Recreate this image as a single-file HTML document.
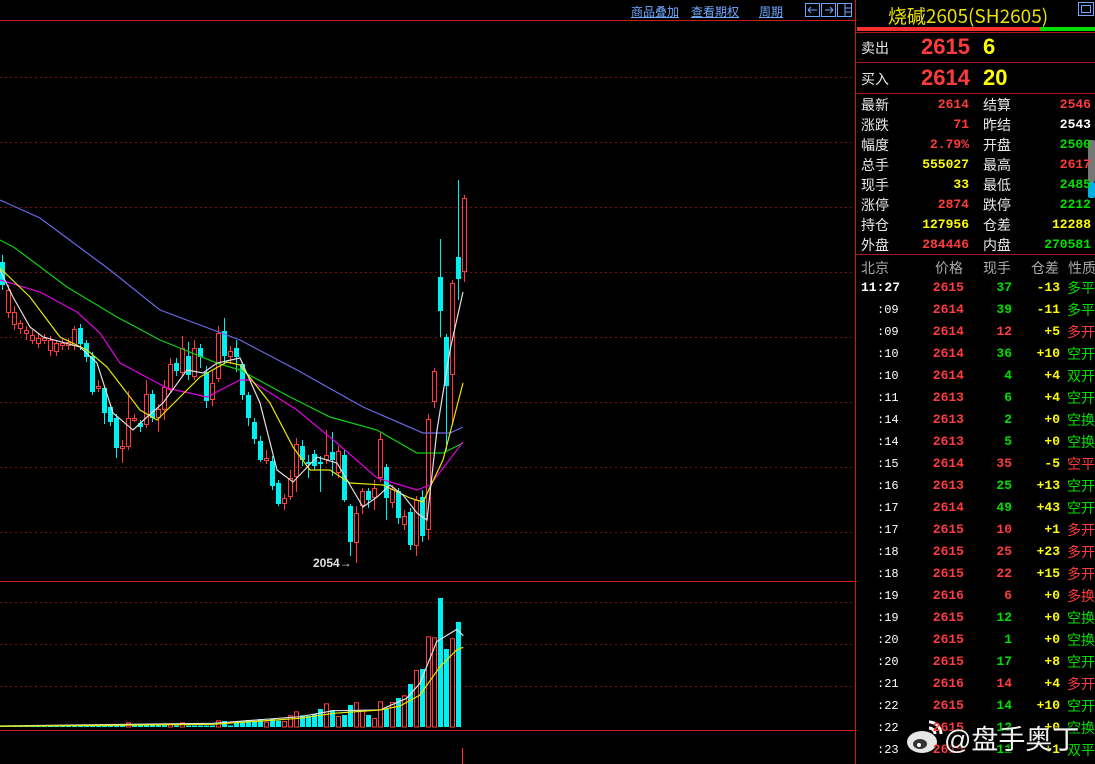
<!DOCTYPE html>
<html><head><meta charset="utf-8"><style>
body{margin:0;width:1095px;height:764px;background:#000;overflow:hidden;position:relative;font-family:"Liberation Sans","Noto Sans CJK SC",sans-serif}
.a{position:absolute;white-space:nowrap}
.lk{color:#6fa8ff;font-size:12px;text-decoration:underline;top:3px}
.r{color:#ff3b3b}.g{color:#00e000}.y{color:#ffff00}.w{color:#fff}
.lb{color:#e8e8e8;font-size:14px}
.v{font-size:13px;font-weight:bold;text-align:right;font-family:"Liberation Mono",monospace}
.t{font-size:13px;font-family:"Liberation Mono",monospace;font-weight:bold}
</style></head><body>
<svg id="c" class="a" style="left:0;top:0" width="1095" height="764"></svg>

<div class="a lk" style="left:631px">商品叠加</div>
<div class="a lk" style="left:691px">查看期权</div>
<div class="a lk" style="left:759px">周期</div>

<div class="a" style="left:862px;top:2px;width:212px;text-align:center;color:#e8e000;font-size:19px;font-family:'Noto Sans CJK SC','Liberation Sans',sans-serif">烧碱2605(SH2605)</div>

<div class="a lb" style="left:861px;top:38px">卖出</div>
<div class="a r" style="left:921px;top:34px;font-size:22px;font-weight:bold">2615</div>
<div class="a y" style="left:983px;top:34px;font-size:22px;font-weight:bold">6</div>
<div class="a lb" style="left:861px;top:69px">买入</div>
<div class="a r" style="left:921px;top:65px;font-size:22px;font-weight:bold">2614</div>
<div class="a y" style="left:983px;top:65px;font-size:22px;font-weight:bold">20</div>

<div id="stats"></div>
<div id="ticks"></div>

<div class="a" style="left:944px;top:718px;color:#fff;font-size:27px;text-shadow:0 0 3px #000,1px 1px 2px #000;opacity:.95">@盘手奥丁</div>

<script>
const S=document.getElementById('c');let h='';
function L(x1,y1,x2,y2,c,d,w){h+=`<line x1="${x1}" y1="${y1}" x2="${x2}" y2="${y2}" stroke="${c}" stroke-width="${w||1}" ${d?'stroke-dasharray="2,3"':''}/>`}
[77,142,207,272,337,402,467,532].forEach(y=>L(0,y+.5,855,y+.5,'#7a1010',1));
[602,644,686].forEach(y=>L(0,y+.5,855,y+.5,'#7a1010',1));
L(0,20.5,855,20.5,'#d01818');L(0,581.5,855,581.5,'#d01818');L(0,730.5,855,730.5,'#d01818');
L(855.5,0,855.5,764,'#d01818');L(462.5,748,462.5,764,'#ff3030');
h+=`<rect x="805.5" y="3.5" width="14" height="13" fill="none" stroke="#6fa8ff"/><rect x="821.5" y="3.5" width="14" height="13" fill="none" stroke="#6fa8ff"/><rect x="837.5" y="3.5" width="14" height="13" fill="none" stroke="#6fa8ff"/>`;
h+=`<path d="M808 10h9M808 10l3-3M808 10l3 3M825 10h8M833 10l-3-3M833 10l-3 3M845 4v12M845 8h6M845 12h6" stroke="#6fa8ff" fill="none"/>`;
h+=`<rect x="1078.5" y="2.5" width="15" height="13" fill="none" stroke="#6fa8ff"/><rect x="1081.5" y="5.5" width="9" height="7" fill="none" stroke="#6fa8ff"/>`;
h+=`<rect x="857" y="27" width="183" height="4" fill="#ff3030"/><rect x="1040" y="27" width="55" height="4" fill="#00e000"/>`;
[32,62,93,254].forEach(y=>L(856,y+.5,1095,y+.5,'#b01818'));
h+=`<rect x="1088" y="140" width="7" height="42" fill="#777" rx="2"/><rect x="1088" y="182" width="7" height="16" fill="#00b0e0" rx="2"/>`;
const C=[[0,262,285,255,290],[6,313,290,285,318],[12,325,312,306,330],[18,329,323,320,334],[24,334,330,326,340],[30,341,335,330,344],[36,344,338,334,348],[42,341,338,334,344],[48,351,340,336,356],[54,352,343,340,356],[60,346,343,338,350],[66,346,342,338,350],[72,346,329,326,350],[78,328,344,324,350],[84,343,357,340,362],[90,356,392,352,395],[96,389,386,380,392],[102,388,413,386,424],[108,407,422,404,426],[114,418,448,414,458],[120,449,446,440,463],[126,447,418,391,450],[132,421,418,414,422],[138,423,427,420,432],[144,425,394,380,428],[150,394,418,390,422],[156,418,409,404,432],[162,410,387,380,420],[168,390,364,358,392],[174,363,371,358,376],[180,373,348,336,376],[186,356,375,342,380],[192,377,348,340,380],[198,348,357,344,368],[204,372,401,366,408],[210,400,383,370,406],[216,379,333,326,382],[222,331,356,318,364],[228,357,351,346,364],[234,348,357,340,372],[240,364,395,362,400],[246,395,418,392,426],[252,422,439,418,444],[258,441,460,436,462],[264,461,458,450,464],[270,461,486,456,490],[276,483,504,480,506],[282,504,498,494,510],[288,497,478,470,500],[294,477,444,438,492],[300,446,460,440,466],[306,462,464,455,478],[312,454,466,450,470],[318,462,464,456,492],[324,460,455,430,464],[330,452,460,432,476],[336,473,451,446,478],[342,455,500,450,502],[348,506,542,504,556],[354,543,513,506,563],[360,506,491,488,514],[366,491,500,488,508],[372,498,488,480,510],[378,478,439,432,482],[384,467,498,464,520],[390,503,489,485,508],[396,491,518,488,524],[402,525,516,510,530],[408,512,545,508,550],[414,546,500,496,556],[420,497,536,490,542],[426,530,419,414,540],[432,402,371,368,408],[438,277,311,239,337],[444,337,386,334,450],[450,375,283,280,425],[456,257,279,180,300],[462,272,198,195,282]];
C.forEach(([x,o,c,hi,lo])=>{const up=c<o,col=up?'#ff3b3b':'#00f0f0',t=Math.min(o,c),b=Math.max(o,c),cx=x+2.5;
L(cx,hi,cx,t,col);L(cx,b,cx,lo,col);
if(up)h+=`<rect x="${x+.5}" y="${t+.5}" width="4" height="${Math.max(b-t-1,1)}" fill="none" stroke="${col}"/>`;
else h+=`<rect x="${x}" y="${t}" width="5" height="${Math.max(b-t,1.5)}" fill="${col}"/>`;});
function P(pts,c){h+=`<polyline points="${pts.map(p=>p.join(',')).join(' ')}" fill="none" stroke="${c}" stroke-width="1.2"/>`}
P([[0,200],[40,218],[110,270],[160,310],[240,340],[297,370],[363,407],[423,433],[450,433],[463,427]],'#6a6ae8');
P([[0,240],[15,248],[67,287],[117,317],[160,340],[217,363],[240,370],[290,397],[330,417],[377,430],[417,453],[443,453],[463,443]],'#10d010');
P([[0,280],[40,292],[77,312],[100,333],[120,363],[167,388],[207,397],[240,380],[250,380],[297,410],[337,443],[377,478],[417,490],[430,485],[447,463],[463,442]],'#e000e0');
P([[0,268],[30,297],[60,337],[87,350],[107,367],[140,410],[157,420],[180,397],[200,377],[227,362],[240,365],[270,403],[293,447],[310,470],[330,470],[350,483],[383,485],[410,498],[423,502],[443,460],[463,383]],'#e8e800');
P([[0,270],[13,297],[30,327],[43,337],[80,347],[97,363],[113,413],[133,430],[147,417],[163,403],[187,370],[203,373],[217,363],[240,358],[260,403],[277,470],[293,482],[317,457],[337,463],[363,507],[377,497],[390,485],[403,495],[417,513],[427,520],[437,430],[450,350],[463,292]],'#e0e0e0');
h+=`<text x="313" y="567" fill="#e0e0e0" font-size="12" font-weight="bold" font-family="Liberation Sans">2054→</text>`;
const V0={0:467,264:465,300:465,318:465,336:462,372:[457,1],498:[460,1],534:[457,1],642:[451,1],660:453,696:455,714:455,732:450,750:455,768:447,786:[455,1],804:447,822:452,840:[453,1],858:[436,1],876:[424,1],894:436,912:438,930:432,948:417,966:[400,1],984:420,1002:[438,1],1020:435,1038:405,1056:[397,1],1074:[420,1],1092:435,1110:[444,1],1128:[394,1],1146:417,1164:[396,1],1182:384,1200:[376,1],1218:342,1236:[300,1],1254:297,1272:[199,1],1290:[202,1],1308:84,1326:237,1344:[205,1],1362:156,1380:[300,1]};
const V={};for(const k in V0)V[Math.round(k/18)]=V0[k];
for(let i=0;i<=76;i++){let v=V[i],red=false,tp=466.5;if(v!==undefined){if(Array.isArray(v)){tp=v[0];red=true}else tp=v}
else if(i>40)tp=458;
const x=i*6,y=tp/3+570,hh=727-y;
if(red)h+=`<rect x="${x+.5}" y="${y+.5}" width="4" height="${Math.max(hh-.5,1)}" fill="none" stroke="#ff3b3b"/>`;
else h+=`<rect x="${x}" y="${y}" width="5" height="${Math.max(hh,1)}" fill="#00f0f0"/>`;}
const tv=a=>a.map(([x,y])=>[x/3,y/3+570]);
P(tv([[0,468],[640,460],[900,440],[1000,422],[1140,420],[1220,385],[1260,340],[1310,215],[1370,178],[1390,197]]),'#e0e0e0');
P(tv([[0,469],[640,463],[900,445],[1000,430],[1140,420],[1200,408],[1260,375],[1320,290],[1370,240],[1390,232]]),'#e8e800');
h+=`<ellipse cx="922" cy="742" rx="15" ry="11" fill="#fff" opacity=".9"/><ellipse cx="920" cy="744" rx="7" ry="5" fill="#333"/><circle cx="919" cy="745" r="2" fill="#fff"/><path d="M929 722a12 12 0 0 1 12 12M929 728a6 6 0 0 1 6 6" stroke="#fff" stroke-width="3" fill="none"/>`;
S.innerHTML=h;
const st=[['最新','2614','r','结算','2546','r'],['涨跌','71','r','昨结','2543','w'],['幅度','2.79%','r','开盘','2500','g'],['总手','555027','y','最高','2617','r'],['现手','33','y','最低','2485','g'],['涨停','2874','r','跌停','2212','g'],['持仓','127956','y','仓差','12288','y'],['外盘','284446','r','内盘','270581','g']];
let s='';st.forEach((r,i)=>{const y=95+i*20;
s+=`<div class="a lb" style="left:861px;top:${y}px">${r[0]}</div><div class="a v ${r[2]}" style="left:900px;width:69px;top:${y+2}px">${r[1]}</div><div class="a lb" style="left:983px;top:${y}px">${r[3]}</div><div class="a v ${r[5]}" style="left:1020px;width:71px;top:${y+2}px">${r[4]}</div>`});
document.getElementById('stats').innerHTML=s;
const tk=[['11:27','2615','37','g','-13','多平','g'],[':09','2614','39','g','-11','多平','g'],[':09','2614','12','r','+5','多开','r'],[':10','2614','36','g','+10','空开','g'],[':10','2614','4','g','+4','双开','g'],[':11','2613','6','g','+4','空开','g'],[':14','2613','2','g','+0','空换','g'],[':14','2613','5','g','+0','空换','g'],[':15','2614','35','r','-5','空平','r'],[':16','2613','25','g','+13','空开','g'],[':17','2614','49','g','+43','空开','g'],[':17','2615','10','r','+1','多开','r'],[':18','2615','25','r','+23','多开','r'],[':18','2615','22','r','+15','多开','r'],[':19','2616','6','r','+0','多换','r'],[':19','2615','12','g','+0','空换','g'],[':20','2615','1','g','+0','空换','g'],[':20','2615','17','g','+8','空开','g'],[':21','2616','14','r','+4','多开','r'],[':22','2615','14','g','+10','空开','g'],[':22','2615','12','g','+0','空换','g'],[':23','2615','11','g','+1','双平','g']];
let t=`<div class="a" style="left:861px;top:258px;color:#aaa;font-size:14px">北京</div><div class="a" style="left:935px;top:258px;color:#aaa;font-size:14px">价格</div><div class="a" style="left:983px;top:258px;color:#aaa;font-size:14px">现手</div><div class="a" style="left:1031px;top:258px;color:#aaa;font-size:14px">仓差</div><div class="a" style="left:1068px;top:258px;color:#aaa;font-size:14px">性质</div>`;
tk.forEach((r,i)=>{const y=280+i*22;
t+=(i==0?`<div class="a t w" style="left:861px;top:${y}px">11:27</div>`:`<div class="a w" style="left:877px;top:${y+1}px;font-size:12px;font-family:'Liberation Mono',monospace">${r[0]}</div>`)+
`<div class="a t r" style="left:920px;width:44px;text-align:right;top:${y}px">${r[1]}</div><div class="a t ${r[3]}" style="left:980px;width:32px;text-align:right;top:${y}px">${r[2]}</div><div class="a t y" style="left:1020px;width:40px;text-align:right;top:${y}px">${r[4]}</div><div class="a ${r[6]}" style="left:1067px;top:${y-2}px;font-size:14px">${r[5]}</div>`});
document.getElementById('ticks').innerHTML=t;
</script>
</body></html>
